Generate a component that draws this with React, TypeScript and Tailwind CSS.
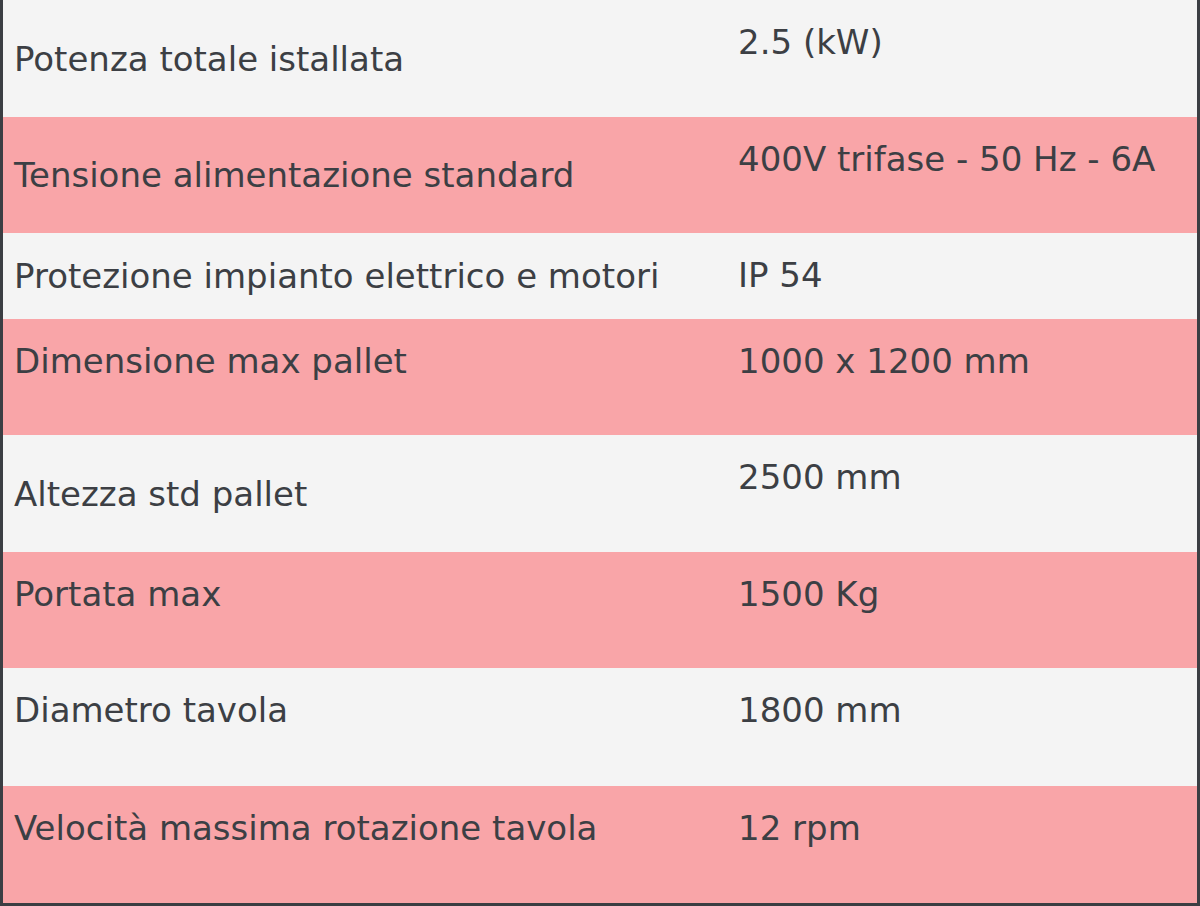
const rows = [
  { label: "Potenza totale istallata", value: "2.5 (kW)", h: "h-[117px]", pink: false, center: true },
  { label: "Tensione alimentazione standard", value: "400V trifase - 50 Hz - 6A", h: "h-[116px]", pink: true, center: true },
  { label: "Protezione impianto elettrico e motori", value: "IP 54", h: "h-[86px]", pink: false, center: true },
  { label: "Dimensione max pallet", value: "1000 x 1200 mm", h: "h-[116px]", pink: true, center: false },
  { label: "Altezza std pallet", value: "2500 mm", h: "h-[117px]", pink: false, center: true },
  { label: "Portata max", value: "1500 Kg", h: "h-[116px]", pink: true, center: false },
  { label: "Diametro tavola", value: "1800 mm", h: "h-[118px]", pink: false, center: false },
  { label: "Velocità massima rotazione tavola", value: "12 rpm", h: "h-[117px]", pink: true, center: false },
];

export default function App() {
  return (
    <div className="w-[1200px] h-[906px] bg-[#3b3e43] px-[3px] pb-[3px] font-['DejaVu_Sans',sans-serif] text-[34px] leading-[40px] text-[#3c3f44]">
      {rows.map((r) => (
        <div
          key={r.label}
          className={`flex ${r.h} ${r.pink ? "bg-[#f9a5a8]" : "bg-[#f4f4f4]"}`}
        >
          <div
            className={`w-[735px] pl-[11px] flex ${r.center ? "items-center" : "items-start pt-[22px]"}`}
          >
            {r.label}
          </div>
          <div className="flex-1 pt-[22px]">{r.value}</div>
        </div>
      ))}
    </div>
  );
}
